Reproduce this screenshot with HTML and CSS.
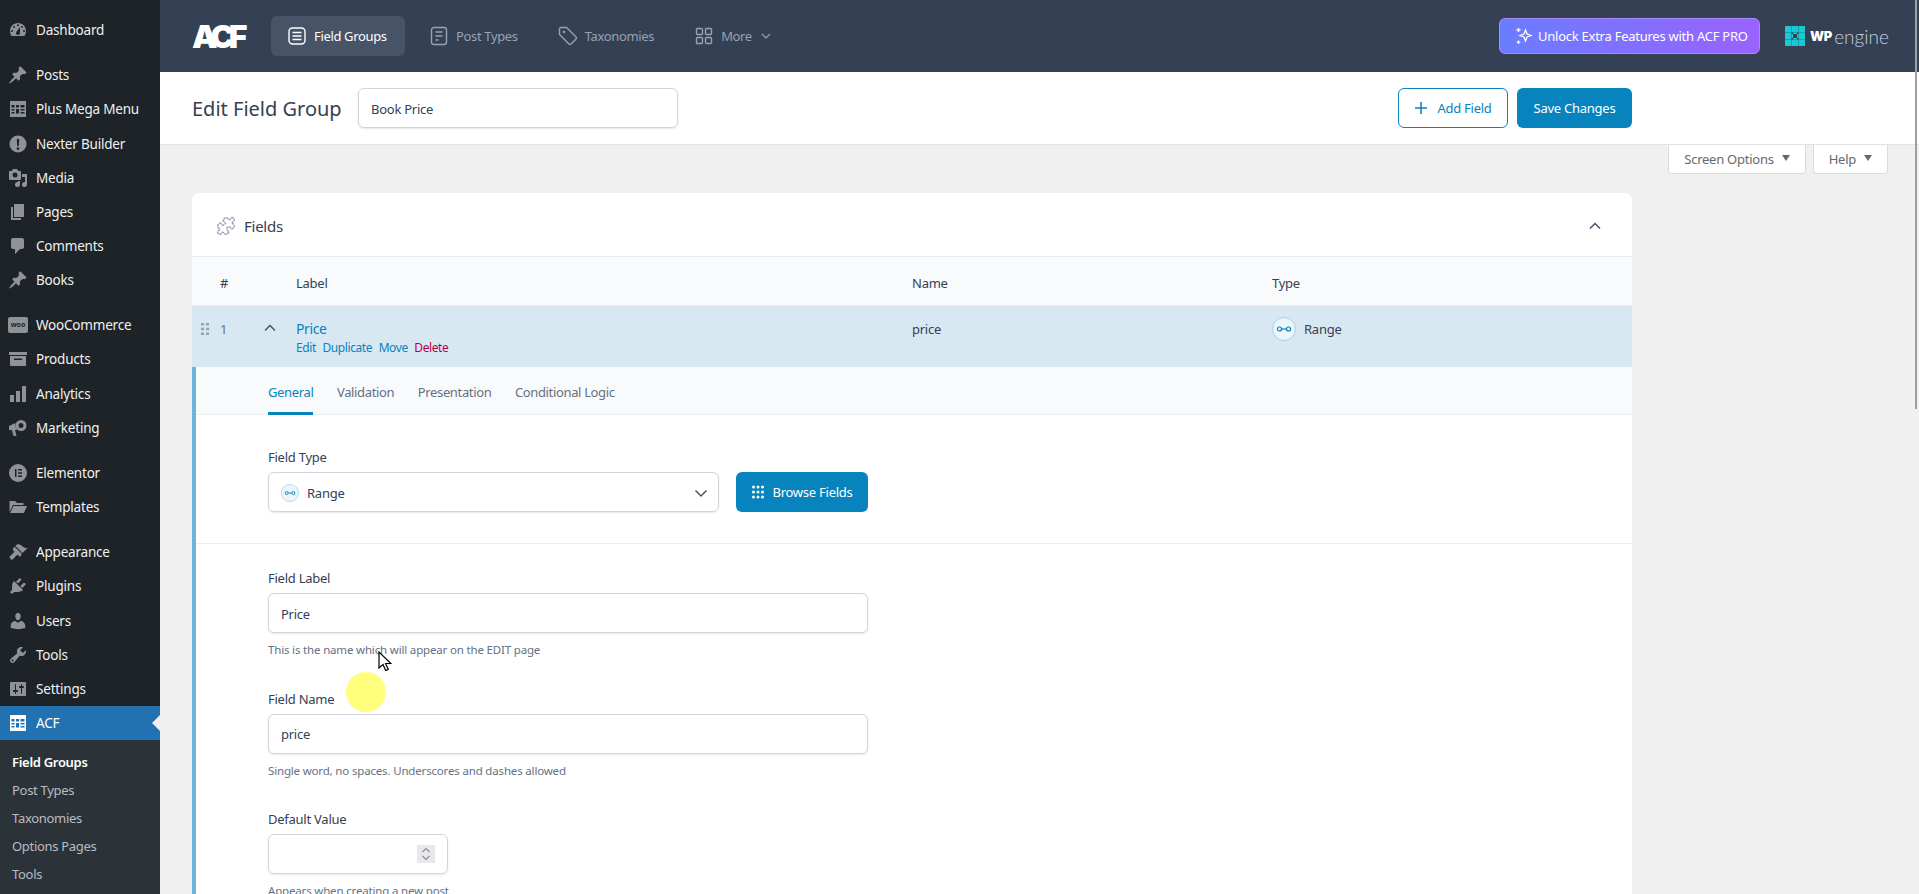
FILE: index.html
```html
<!DOCTYPE html>
<html lang="en">
<head>
    <meta charset="UTF-8">
    <title>Edit Field Group</title>
    <link rel="stylesheet" href="styles.css">
</head>
<body>
    <svg class="defs" width="0" height="0">
        <symbol id="i-dash" viewBox="0 0 20 20"><path fill-rule="evenodd" d="M3.76 16h12.48c1.1-1.37 1.76-3.11 1.76-5 0-4.42-3.58-8-8-8s-8 3.58-8 8c0 1.89.66 3.63 1.76 5zM10 4.2a1 1 0 1 1 0 2 1 1 0 0 1 0-2zM6 6a1 1 0 1 1 0 2 1 1 0 0 1 0-2zm8 0a1 1 0 1 1 0 2 1 1 0 0 1 0-2zm-5.37 5.55L12 7v6c0 1.1-.9 2-2 2s-2-.9-2-2c0-.57.24-1.08.63-1.45zM4 10a1 1 0 1 1 0 2 1 1 0 0 1 0-2zm12 0a1 1 0 1 1 0 2 1 1 0 0 1 0-2z"/></symbol>
        <symbol id="i-pin" viewBox="0 0 20 20"><path d="M10.44 3.02l1.82-1.82 6.36 6.35-1.83 1.82c-1.05-.68-2.48-.57-3.41.36l-.75.75c-.92.93-1.04 2.35-.35 3.41l-1.83 1.82-2.41-2.41-2.8 2.79c-.42.42-3.38 2.71-3.8 2.29s1.86-3.39 2.28-3.81l2.79-2.79L4.1 9.36l1.83-1.82c1.05.69 2.48.57 3.4-.36l.75-.75c.93-.92 1.05-2.35.36-3.41z"/></symbol>
        <symbol id="i-table" viewBox="0 0 20 20"><path fill-rule="evenodd" d="M2 2h16v16H2zM3.5 6v2.5h3V6zm4.5 0v2.5h3V6zm4.500 0v2.500h4V6zM3.500 10v1.500h3V10zm0 3v1.500h3V13zM8 10v4.500h3V10zm4.500 0v1.500h4V10zm0 3v1.500h4V13z"/></symbol>
        <symbol id="i-alert" viewBox="0 0 20 20"><path fill-rule="evenodd" d="M10 1.500a8.500 8.500 0 1 1 0 17 8.500 8.500 0 0 1 0-17zM8.800 5l.4 7h1.600l.4-7zM10 13.200a1.400 1.400 0 1 0 0 2.800 1.400 1.400 0 0 0 0-2.800z"/></symbol>
        <symbol id="i-media" viewBox="0 0 20 20"><path fill-rule="evenodd" d="M13 11V4c0-.55-.45-1-1-1h-1.670L9 1H5L3.670 3H2c-.55 0-1 .45-1 1v7c0 .55.45 1 1 1h10c.55 0 1-.45 1-1zM7 4.500a2.500 2.500 0 1 1 0 5 2.500 2.500 0 0 1 0-5zM14 6h5v10.500a2.500 2.500 0 1 1-2-2.450V9h-3V6zm-4 8.050V13h2v3.500a2.500 2.500 0 1 1-2-2.450z"/></symbol>
        <symbol id="i-page" viewBox="0 0 20 20"><path d="M6 15V2h10v13H6zm-1 1h8v2H3V5h2v11z"/></symbol>
        <symbol id="i-comment" viewBox="0 0 20 20"><path d="M5 2h9c1.100 0 2 .9 2 2v7c0 1.100-.9 2-2 2h-2l-5 5v-5H5c-1.100 0-2-.9-2-2V4c0-1.100.9-2 2-2z"/></symbol>
        <symbol id="i-box" viewBox="0 0 20 20"><path fill-rule="evenodd" d="M1 3h18v3H1zM2 7h16v10H2zM6 9.500V11h8V9.500z"/></symbol>
        <symbol id="i-bars" viewBox="0 0 20 20"><path d="M2 11h4v7H2zM8 7h4v11H8zM14 2h4v16h-4z"/></symbol>
        <symbol id="i-mega" viewBox="0 0 20 20"><path fill-rule="evenodd" d="M18.500 7.500a5.500 5.500 0 1 1-11 0 5.500 5.500 0 0 1 11 0zM13 5a2.500 2.500 0 1 0 0 5 2.500 2.500 0 0 0 0-5zM1 8l6.500-3c-.6 2-.1 5 1.500 7L7 12l1.500 6H5.500L4 12.300 1 12z"/></symbol>
        <symbol id="i-elementor" viewBox="0 0 20 20"><path fill-rule="evenodd" d="M10 1a9 9 0 1 1 0 18 9 9 0 0 1 0-18zM7 6v8h1.500V6zm3 0v1.500h4V6zm0 3.200v1.500h4V9.200zm0 3.300V14h4v-1.500z"/></symbol>
        <symbol id="i-folder" viewBox="0 0 20 20"><path d="M1.500 4h5.500l2 2h6.500v2H5L1.500 15zM5.500 9H19l-3 7H2z"/></symbol>
        <symbol id="i-brush" viewBox="0 0 20 20"><path d="M14.480 11.060L7.410 3.990l1.500-1.500c.5-.56 2.300-.47 3.510.32 1.210.8 1.430 1.280 2.910 2.100 1.180.64 2.450 1.260 4.450.85zm-.71.71L6.700 4.700 4.930 6.470c-.39.39-.39 1.020 0 1.410l1.060 1.060c.39.39.39 1.030 0 1.420l-4.240 4.240c-.39.39-.39 1.020 0 1.410l1.410 1.410c.39.39 1.020.39 1.410 0l4.240-4.240c.39-.39 1.030-.39 1.420 0l1.060 1.060c.39.39 1.020.39 1.410 0z"/></symbol>
        <symbol id="i-plugin" viewBox="0 0 20 20"><path d="M13.110 4.360L9.870 7.600 8 5.730l3.240-3.240c.35-.34 1.050-.2 1.560.32.52.51.66 1.210.31 1.550zm-8 1.770l.91-1.120 9.010 9.010-1.190.84c-.71.71-2.630 1.160-3.820 1.160H6.140L4.900 17.260c-.59.59-1.540.59-2.120 0-.59-.58-.59-1.530 0-2.120l1.240-1.240v-3.880c0-1.130.4-3.190 1.090-3.890zm7.260 3.970l3.240-3.240c.34-.35 1.040-.21 1.550.31.52.51.66 1.210.31 1.550l-3.240 3.250z"/></symbol>
        <symbol id="i-user" viewBox="0 0 20 20"><path d="M10 9.250c-2.270 0-2.730-3.440-2.730-3.440C7 4.020 7.820 2 9.970 2c2.160 0 2.980 2.020 2.710 3.810 0 0-.41 3.440-2.680 3.440zm0 2.570L12.720 10c2.390 0 4.520 2.330 4.520 4.530v2.490s-3.650 1.130-7.240 1.130c-3.650 0-7.240-1.130-7.240-1.130v-2.490c0-2.250 1.940-4.480 4.470-4.480z"/></symbol>
        <symbol id="i-tool" viewBox="0 0 20 20"><path fill-rule="evenodd" d="M16.680 9.770c-1.340 1.340-3.300 1.670-4.950.99l-5.410 6.520c-.99.99-2.590.99-3.580 0s-.99-2.590 0-3.570l6.520-5.420c-.68-1.650-.35-3.610.99-4.950 1.280-1.280 3.120-1.620 4.720-1.060l-2.890 2.890 2.820 2.820 2.860-2.870c.53 1.580.18 3.390-1.080 4.650zM3.810 16.210c.4.39 1.040.39 1.430 0 .4-.4.4-1.040 0-1.430-.39-.4-1.030-.4-1.430 0-.39.39-.39 1.030 0 1.430z"/></symbol>
        <symbol id="i-sliders" viewBox="0 0 20 20"><path fill-rule="evenodd" d="M18 16V4c0-.55-.45-1-1-1H3c-.55 0-1 .45-1 1v12c0 .55.45 1 1 1h14c.55 0 1-.45 1-1zM8 11h1c.55 0 1 .45 1 1s-.45 1-1 1H8v1.500c0 .28-.22.5-.5.5s-.5-.22-.5-.5V13H6c-.55 0-1-.45-1-1s.45-1 1-1h1V5.500c0-.28.22-.5.5-.5s.5.22.5.5V11zm5-2h-1c-.55 0-1-.45-1-1s.45-1 1-1h1V5.500c0-.28.22-.5.5-.5s.5.22.5.5V7h1c.55 0 1 .45 1 1s-.45 1-1 1h-1v5.500c0 .28-.22.5-.5.5s-.5-.22-.5-.5V9z"/></symbol>
        <symbol id="i-range" viewBox="0 0 24 24"><circle cx="12" cy="12" r="11.500" fill="#ebf5fa" stroke="#a5d2e7"/><circle cx="7.500" cy="12" r="2" fill="none" stroke="#0783be" stroke-width="1.200"/><circle cx="16.500" cy="12" r="2" fill="none" stroke="#0783be" stroke-width="1.200"/><path d="M9.500 12h5" stroke="#0783be" stroke-width="1.200"/></symbol>
        <symbol id="i-grip" viewBox="0 0 10 12"><path d="M1 0h3v2.500H1zM6 0h3v2.500H6zM1 4.700h3v2.500H1zM6 4.700h3v2.500H6zM1 9.400h3V12H1zM6 9.400h3V12H6z"/></symbol>
    </svg>

    <div class="sidebar">
        <ul class="menu">
            <li><svg class="ico"><use href="#i-dash"/></svg>Dashboard</li>
            <li class="sep"></li>
            <li><svg class="ico"><use href="#i-pin"/></svg>Posts</li>
            <li><svg class="ico"><use href="#i-table"/></svg>Plus Mega Menu</li>
            <li><svg class="ico"><use href="#i-alert"/></svg>Nexter Builder</li>
            <li><svg class="ico"><use href="#i-media"/></svg>Media</li>
            <li><svg class="ico"><use href="#i-page"/></svg>Pages</li>
            <li><svg class="ico"><use href="#i-comment"/></svg>Comments</li>
            <li><svg class="ico"><use href="#i-pin"/></svg>Books</li>
            <li class="sep"></li>
            <li><span class="woo">woo</span>WooCommerce</li>
            <li><svg class="ico"><use href="#i-box"/></svg>Products</li>
            <li><svg class="ico"><use href="#i-bars"/></svg>Analytics</li>
            <li><svg class="ico"><use href="#i-mega"/></svg>Marketing</li>
            <li class="sep"></li>
            <li><svg class="ico"><use href="#i-elementor"/></svg>Elementor</li>
            <li><svg class="ico"><use href="#i-folder"/></svg>Templates</li>
            <li class="sep"></li>
            <li><svg class="ico"><use href="#i-brush"/></svg>Appearance</li>
            <li><svg class="ico"><use href="#i-plugin"/></svg>Plugins</li>
            <li><svg class="ico"><use href="#i-user"/></svg>Users</li>
            <li><svg class="ico"><use href="#i-tool"/></svg>Tools</li>
            <li><svg class="ico"><use href="#i-sliders"/></svg>Settings</li>
            <li class="current"><svg class="ico"><use href="#i-table"/></svg>ACF</li>
        </ul>
        <ul class="submenu">
            <li class="active">Field Groups</li>
            <li>Post Types</li>
            <li>Taxonomies</li>
            <li>Options Pages</li>
            <li>Tools</li>
        </ul>
    </div>

    <div class="main">
        <div class="topbar">
            <div class="logo">ACF</div>
            <a class="nav-tab active">
                <svg class="nav-ico" viewBox="0 0 20 20"><rect x="2" y="2" width="16" height="16" rx="3.500"/><path d="M5.500 6.500h9M5.500 10h9M5.500 13.500h9"/></svg>
                Field Groups
            </a>
            <a class="nav-tab">
                <svg class="nav-ico" viewBox="0 0 20 20"><rect x="2.500" y="1.500" width="15" height="17" rx="2.500"/><path d="M6.500 6h7M6.500 10h7M6.500 14h3"/></svg>
                Post Types
            </a>
            <a class="nav-tab">
                <svg class="nav-ico" viewBox="0 0 20 20"><path d="M1.500 3a1.500 1.500 0 0 1 1.500-1.500h5.500l9.500 9.500a1.500 1.500 0 0 1 0 2.100l-4.900 4.900a1.500 1.500 0 0 1-2.100 0L1.500 8.500z"/><circle cx="6" cy="6" r=".6"/></svg>
                Taxonomies
            </a>
            <a class="nav-tab">
                <svg class="nav-ico" viewBox="0 0 20 20"><rect x="2.500" y="2.500" width="6" height="6" rx="1"/><rect x="11.500" y="2.500" width="6" height="6" rx="1"/><rect x="2.500" y="11.500" width="6" height="6" rx="1"/><rect x="11.500" y="11.500" width="6" height="6" rx="1"/></svg>
                More
                <svg class="more-chev" viewBox="0 0 12 12"><path d="M2 4l4 4 4-4"/></svg>
            </a>
            <a class="unlock">
                <svg class="spark" viewBox="0 0 20 20"><path d="M11.500 4l1.500 4 4 1.500-4 1.500-1.500 4-1.500-4-4-1.500 4-1.500z"/><path d="M4.500 2v4M2.500 4h4M4.500 14.500v3.500M2.700 16.200h3.600"/></svg>
                Unlock Extra Features with ACF PRO
            </a>
            <div class="wpe">
                <svg class="wpe-mark" viewBox="0 0 20 20"><rect width="20" height="20"/><path class="wpe-grid" d="M6.500 0v20M13.500 0v20M0 6.500h20M0 13.500h20"/><path class="wpe-core" d="M8 8h4v4H8zM6.500 6.500h1.500v1.500H6.500zM12 6.500h1.500v1.500H12zM6.500 12h1.500v1.500H6.500zM12 12h1.500v1.500H12z"/></svg>
                <span class="wpe-wp">WP</span><span class="wpe-engine">engine</span>
            </div>
        </div>

        <div class="titlebar">
            <h1>Edit Field Group</h1>
            <input class="title-input" type="text" value="Book Price">
            <div class="title-actions">
                <a class="btn btn-outline"><svg class="plus" viewBox="0 0 14 14"><path d="M7 1v12M1 7h12"/></svg>Add Field</a>
                <a class="btn btn-primary save">Save Changes</a>
            </div>
        </div>

        <div class="screen-meta">
            <span class="meta-tab">Screen Options <i class="caret"></i></span>
            <span class="meta-tab">Help <i class="caret"></i></span>
        </div>

        <div class="postbox">
            <div class="postbox-head">
                <svg class="puzzle" viewBox="0 0 24 24"><path d="M19.439 7.85c-.049.322.059.648.289.878l1.568 1.568c.47.47.706 1.087.706 1.704s-.235 1.233-.706 1.704l-1.611 1.611a.98.98 0 0 1-.837.276c-.47-.07-.802-.48-.968-.925a2.501 2.501 0 1 0-3.214 3.214c.446.166.855.497.925.968a.979.979 0 0 1-.276.837l-1.61 1.61a2.404 2.404 0 0 1-1.705.707 2.402 2.402 0 0 1-1.704-.706l-1.568-1.568a1.026 1.026 0 0 0-.877-.29c-.493.074-.84.504-1.02.968a2.5 2.5 0 1 1-3.237-3.237c.464-.18.894-.527.967-1.02a1.026 1.026 0 0 0-.289-.877l-1.568-1.568A2.402 2.402 0 0 1 1.998 12c0-.617.236-1.234.706-1.704L4.230 8.770c.24-.24.581-.353.917-.303.515.077.877.528 1.073 1.010a2.500 2.500 0 1 0 3.259-3.259c-.482-.196-.933-.558-1.010-1.073-.05-.336.062-.676.303-.917l1.525-1.525A2.402 2.402 0 0 1 12 1.998c.617 0 1.234.236 1.704.706l1.568 1.568c.23.23.556.338.877.29.493-.074.84-.504 1.020-.968a2.500 2.500 0 1 1 3.237 3.237c-.464.18-.894.527-.967 1.020Z"/></svg>
                <h2>Fields</h2>
                <svg class="collapse" viewBox="0 0 14 14"><path d="M2 9.500l5-5 5 5"/></svg>
            </div>

            <div class="field-cols field-head">
                <div class="col-order">#</div>
                <div>Label</div>
                <div>Name</div>
                <div>Type</div>
            </div>

            <div class="field-cols field-row">
                <div class="row-order">
                    <svg class="grip"><use href="#i-grip"/></svg>
                    <span class="num">1</span>
                    <svg class="row-chev" viewBox="0 0 14 14"><path d="M2 9.500l5-5 5 5"/></svg>
                </div>
                <div>
                    <div class="field-title">Price</div>
                    <div class="row-actions"><a>Edit</a><a>Duplicate</a><a>Move</a><a class="del">Delete</a></div>
                </div>
                <div class="plain">price</div>
                <div class="type-cell"><svg class="range-ico"><use href="#i-range"/></svg>Range</div>
            </div>

            <div class="settings">
                <div class="tabs">
                    <a class="tab active">General</a>
                    <a class="tab">Validation</a>
                    <a class="tab">Presentation</a>
                    <a class="tab">Conditional Logic</a>
                </div>

                <div class="type-block">
                    <label>Field Type</label>
                    <div class="type-line">
                        <div class="select-box">
                            <svg class="range-small"><use href="#i-range"/></svg>
                            <span>Range</span>
                            <svg class="select-chev" viewBox="0 0 14 14"><path d="M1.500 4.500L7 10l5.500-5.500"/></svg>
                        </div>
                        <a class="btn btn-primary browse">
                            <svg class="dots" viewBox="0 0 14 14"><g><circle cx="2.500" cy="2" r="1.500"/><circle cx="7" cy="2" r="1.500"/><circle cx="11.500" cy="2" r="1.500"/><circle cx="2.500" cy="7" r="1.500"/><circle cx="7" cy="7" r="1.500"/><circle cx="11.500" cy="7" r="1.500"/><circle cx="2.500" cy="12" r="1.500"/><circle cx="7" cy="12" r="1.500"/><circle cx="11.500" cy="12" r="1.500"/></g></svg>
                            Browse Fields
                        </a>
                    </div>
                </div>

                <div class="form-block">
                    <div class="form-group">
                        <label>Field Label</label>
                        <input class="text-input" type="text" value="Price">
                        <p class="hint">This is the name which will appear on the EDIT page</p>
                    </div>
                    <div class="form-group">
                        <label>Field Name</label>
                        <input class="text-input" type="text" value="price">
                        <p class="hint">Single word, no spaces. Underscores and dashes allowed</p>
                    </div>
                    <div class="form-group">
                        <label>Default Value</label>
                        <div class="number-input">
                            <span class="spinner"><svg viewBox="0 0 18 18"><path d="M5.500 7L9 3.500 12.500 7M5.500 11L9 14.500 12.500 11"/></svg></span>
                        </div>
                        <p class="hint">Appears when creating a new post</p>
                    </div>
                </div>
            </div>
        </div>
    </div>

    <div class="scroll-thumb"></div>
    <div class="cursor-dot"></div>
    <svg class="cursor" viewBox="0 0 14 22"><path d="M1 1v16l4-3.500 2.700 6 2.600-1.100-2.700-5.900H13z"/></svg>
</body>
</html>
```

FILE: styles.css
```css
/* Global Styles */
html, body {
    height: 894px;
    overflow: hidden;
}

body {
    margin: 0;
    display: flex;
    font-family: 'Noto Sans', sans-serif;
    font-size: 13px;
    letter-spacing: -0.25px;
    background-color: #f0f0f1;
    color: #344054;
}

.defs {
    position: absolute;
}

ul {
    list-style: none;
    margin: 0;
    padding: 0;
}

a {
    text-decoration: none;
}

/* Sidebar */
.sidebar {
    width: 160px;
    flex: none;
    height: 894px;
    background-color: #1d2327;
    color: #f0f0f1;
    font-size: 13.5px;
    letter-spacing: -0.2px;
}

.menu {
    padding-top: 13px;
}

.menu li {
    height: 34.17px;
    display: flex;
    align-items: center;
    padding-left: 8px;
    position: relative;
}

.menu li.sep {
    height: 11px;
    padding: 0;
}

.ico {
    width: 20px;
    height: 20px;
    margin-right: 8px;
    fill: #8f9398;
    flex: none;
}

.woo {
    width: 20px;
    height: 16px;
    line-height: 15px;
    margin-right: 8px;
    border-radius: 2px;
    background-color: #8f9398;
    color: #1d2327;
    font-size: 7px;
    font-weight: 700;
    letter-spacing: 0;
    text-align: center;
    flex: none;
}

.menu li.current {
    background-color: #2271b1;
    color: #fff;
}

.current .ico {
    fill: #fff;
}

.menu li.current::after {
    content: "";
    position: absolute;
    right: 0;
    top: 9px;
    border: 8px solid transparent;
    border-right-color: #f0f0f1;
    border-left: 0;
}

.submenu {
    background-color: #2c3338;
    padding: 8px 0 6px;
    height: 154px;
    font-size: 13px;
    letter-spacing: -0.3px;
    color: #b9bcc4;
}

.submenu li {
    height: 28px;
    line-height: 28px;
    padding-left: 12px;
}

.submenu li.active {
    color: #fff;
    font-weight: 600;
}

/* Main */
.main {
    flex: 1;
    min-width: 0;
}

.topbar {
    height: 72px;
    background-color: #344054;
    display: flex;
    align-items: center;
    padding: 0 31px 0 32px;
}

.logo {
    width: 54px;
    margin-right: 25px;
    font-family: 'Inter', sans-serif;
    font-size: 32px;
    font-weight: 900;
    letter-spacing: -5.5px;
    color: #fff;
}

.nav-tab {
    height: 40px;
    display: flex;
    align-items: center;
    padding: 0 16px;
    border-radius: 6px;
    margin-right: 8px;
    letter-spacing: -0.35px;
    color: #98a2b3;
}

.nav-tab.active {
    width: 134px;
    box-sizing: border-box;
    background-color: #475467;
    color: #fff;
}

.nav-ico {
    width: 20px;
    height: 20px;
    margin-right: 7px;
    fill: none;
    stroke: currentColor;
    stroke-width: 1.400;
}

.more-chev {
    width: 12px;
    height: 12px;
    margin-left: 8px;
    fill: none;
    stroke: currentColor;
    stroke-width: 1.200;
}

.unlock {
    margin-left: auto;
    height: 36px;
    width: 261px;
    box-sizing: border-box;
    display: flex;
    align-items: center;
    padding-left: 14px;
    border-radius: 6px;
    border: 1px solid #a78bfa;
    background: linear-gradient(90deg, #6a7dff, #9a62ff);
    color: #fff;
    white-space: nowrap;
}

.spark {
    width: 20px;
    height: 20px;
    margin-right: 4px;
    fill: none;
    stroke: #fff;
    stroke-width: 1.300;
}

.wpe {
    width: 103px;
    margin-left: 25px;
    display: flex;
    align-items: center;
    color: #fff;
}

.wpe-mark {
    width: 20px;
    height: 20px;
    margin-right: 5px;
    fill: #19c9d4;
    flex: none;
}

.wpe-grid {
    fill: none;
    stroke: #1296a3;
    stroke-width: 0.800;
}

.wpe-core {
    fill: #344054;
}

.wpe-wp {
    font-family: 'Inter', sans-serif;
    font-weight: 900;
    font-size: 13px;
    letter-spacing: -0.2px;
}

.wpe-engine {
    font-family: 'Lato', sans-serif;
    font-weight: 300;
    font-size: 19px;
    letter-spacing: 0;
    margin-left: 2px;
    color: #c9ced6;
}

.titlebar {
    height: 73px;
    box-sizing: border-box;
    background-color: #fff;
    border-bottom: 1px solid #e3e3e5;
    display: flex;
    align-items: center;
    padding: 0 287px 0 32px;
}

h1 {
    width: 149px;
    margin: 0 17px 0 0;
    font-size: 20px;
    font-weight: 400;
    letter-spacing: 0;
    color: #344054;
    white-space: nowrap;
}

.title-input {
    width: 320px;
}

input {
    font-family: inherit;
    letter-spacing: inherit;
}

.title-input, .text-input {
    height: 40px;
    box-sizing: border-box;
    padding: 1px 12px 0;
    border: 1px solid #d0d5dd;
    border-radius: 6px;
    box-shadow: 0 1px 2px rgba(16, 24, 40, 0.1);
    font-size: 13px;
    color: #344054;
    background-color: #fff;
    outline: none;
}

.title-actions {
    margin-left: auto;
    display: flex;
    gap: 9px;
}

.btn {
    height: 40px;
    box-sizing: border-box;
    display: flex;
    align-items: center;
    justify-content: center;
    border-radius: 6px;
    font-size: 13px;
}

.btn-outline {
    width: 110px;
    border: 1px solid #0783be;
    color: #0783be;
    background-color: #fff;
}

.plus {
    width: 14px;
    height: 14px;
    margin-right: 9px;
    fill: none;
    stroke: #0783be;
    stroke-width: 1.500;
}

.btn-primary {
    background-color: #0783be;
    color: #fff;
}

.save {
    width: 115px;
}

.screen-meta {
    height: 29px;
    display: flex;
    justify-content: flex-end;
    gap: 7px;
    padding-right: 31px;
}

.meta-tab {
    box-sizing: border-box;
    height: 29px;
    padding: 0 15px;
    display: flex;
    align-items: center;
    background-color: #fff;
    border: 1px solid #dcdcde;
    border-top: 0;
    border-radius: 0 0 4px 4px;
    color: #646970;
}

.caret {
    margin-left: 8px;
    margin-top: -3px;
    border-style: solid;
    border-width: 6px 4px 0;
    border-color: #646970 transparent transparent;
}

/* Field group box */
.postbox {
    width: 1440px;
    margin: 19px 0 0 32px;
    background-color: #fff;
    border-radius: 8px 8px 0 0;
}

.postbox-head {
    height: 64px;
    box-sizing: border-box;
    display: flex;
    align-items: center;
    padding: 2px 30px 0 24px;
    border-bottom: 1px solid #eaecf0;
}

.puzzle {
    width: 20px;
    height: 20px;
    margin-right: 8px;
    fill: none;
    stroke: #98a2b3;
    stroke-width: 1.800;
    stroke-dasharray: 3 0.8;
}

h2 {
    margin: 0;
    font-size: 15px;
    font-weight: 400;
    color: #344054;
}

.collapse {
    margin-left: auto;
    width: 14px;
    height: 14px;
    fill: none;
    stroke: #475467;
    stroke-width: 1.500;
}

.field-cols {
    display: grid;
    grid-template-columns: 104px 616px 360px 1fr;
}

.field-head {
    height: 49px;
    box-sizing: border-box;
    padding-top: 3px;
    align-items: center;
    background-color: #f9fafb;
    border-bottom: 1px solid #eaecf0;
    color: #344054;
}

.col-order {
    padding-left: 28px;
}

.field-row {
    height: 61px;
    box-sizing: border-box;
    padding-top: 12px;
    background-color: #d8e8f3;
}

.row-order {
    display: flex;
    align-items: flex-start;
    padding-top: 2px;
    color: #667085;
}

.grip {
    width: 10px;
    height: 12px;
    margin: 3px 0 0 8px;
    fill: #98a2b3;
}

.num {
    width: 53px;
    padding-left: 10px;
    box-sizing: border-box;
    line-height: 18px;
}

.row-chev {
    width: 14px;
    height: 14px;
    margin-top: 1px;
    fill: none;
    stroke: #475467;
    stroke-width: 1.500;
}

.field-title {
    color: #0783be;
    font-size: 14px;
    letter-spacing: -0.4px;
    line-height: 22px;
}

.row-actions {
    display: flex;
    gap: 6.5px;
    font-size: 12px;
    letter-spacing: -0.4px;
    line-height: 16px;
}

.row-actions a {
    color: #0783be;
}

.row-actions a.del {
    color: #b8003f;
}

.plain {
    padding-top: 2px;
    line-height: 18px;
}

.type-cell {
    display: flex;
    align-items: flex-start;
    margin-top: -1px;
    line-height: 24px;
}

.range-ico {
    width: 24px;
    height: 24px;
    margin-right: 8px;
}

/* Expanded settings */
.settings {
    border-left: 4px solid #6bb5d8;
}

.tabs {
    height: 48px;
    box-sizing: border-box;
    display: flex;
    gap: 23.5px;
    padding-left: 72px;
    letter-spacing: -0.35px;
    background-color: #f9fafb;
    border-bottom: 1px solid #eaecf0;
}

.tab {
    height: 48px;
    box-sizing: border-box;
    line-height: 50px;
    color: #667085;
}

.tab.active {
    color: #0783be;
    border-bottom: 3px solid #0783be;
}

label {
    display: block;
    line-height: 19px;
    color: #344054;
    margin-bottom: 5px;
}

.type-block {
    height: 129px;
    box-sizing: border-box;
    padding: 33px 0 0 72px;
    border-bottom: 1px solid #eaecf0;
}

.type-line {
    display: flex;
    gap: 17px;
}

.select-box {
    width: 451px;
    height: 40px;
    box-sizing: border-box;
    display: flex;
    align-items: center;
    padding: 1px 10px 0 12px;
    border: 1px solid #d0d5dd;
    border-radius: 6px;
    box-shadow: 0 1px 2px rgba(16, 24, 40, 0.1);
}

.range-small {
    width: 18px;
    height: 18px;
    margin-right: 8px;
}

.select-chev {
    margin-left: auto;
    width: 14px;
    height: 14px;
    fill: none;
    stroke: #475467;
    stroke-width: 1.500;
}

.browse {
    width: 132px;
}

.dots {
    width: 14px;
    height: 14px;
    margin-right: 7px;
    fill: #fff;
}

.form-block {
    padding: 25px 0 0 72px;
}

.form-group {
    height: 120.5px;
}

.form-group label {
    height: 19px;
}

.text-input {
    display: block;
    width: 600px;
}

.hint {
    margin: 9px 0 0;
    font-size: 11.5px;
    letter-spacing: -0.17px;
    line-height: 16px;
    color: #667085;
}

.number-input {
    width: 180px;
    height: 40px;
    box-sizing: border-box;
    display: flex;
    align-items: center;
    justify-content: flex-end;
    padding-right: 12px;
    border: 1px solid #d0d5dd;
    border-radius: 6px;
    box-shadow: 0 1px 2px rgba(16, 24, 40, 0.1);
}

.spinner {
    width: 18px;
    height: 18px;
    background-color: #e8e8ec;
}

.spinner svg {
    display: block;
    width: 18px;
    height: 18px;
    fill: none;
    stroke: #8a8f98;
    stroke-width: 1.200;
}

/* Overlays */
.scroll-thumb {
    position: absolute;
    left: 1915px;
    top: 0;
    width: 2px;
    height: 409px;
    background-color: #9ca0a5;
}

.cursor-dot {
    position: absolute;
    left: 346px;
    top: 672px;
    width: 40px;
    height: 40px;
    border-radius: 50%;
    background-color: #ffff7d;
}

.cursor {
    position: absolute;
    left: 378px;
    top: 651px;
    width: 14px;
    height: 22px;
    fill: #fff;
    stroke: #000;
    stroke-width: 1.200;
}
```
